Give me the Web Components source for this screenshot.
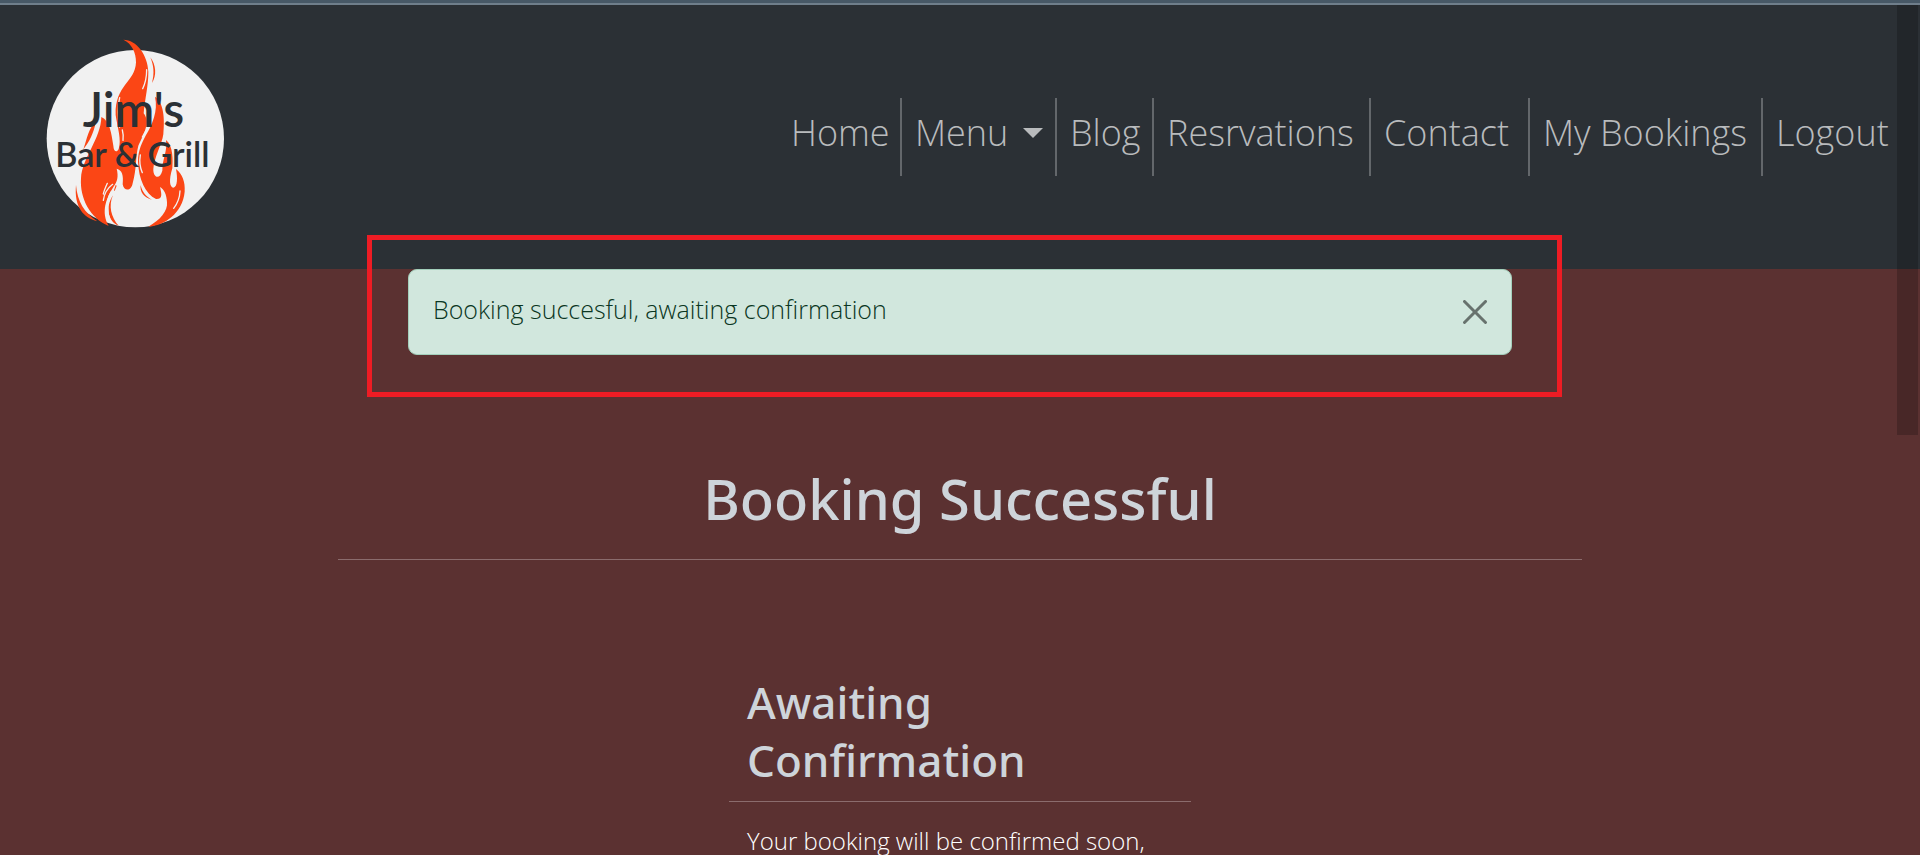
<!DOCTYPE html>
<html lang="en">
<head>
<meta charset="utf-8">
<meta name="viewport" content="width=device-width, initial-scale=1">
<title>Jim's Bar &amp; Grill</title>
<style>
html { scrollbar-width: none; background: #5b3131; }
body { margin: 0; font-family: "Open Sans", "Noto Sans", sans-serif; font-weight: 300; color: #fff; }
</style>
</head>
<body>
<site-page>
  <site-header slot="header">
    <site-logo slot="brand"></site-logo>
    <nav-item>Home</nav-item>
    <nav-item menu>Menu</nav-item>
    <nav-item>Blog</nav-item>
    <nav-item>Resrvations</nav-item>
    <nav-item>Contact</nav-item>
    <nav-item>My Bookings</nav-item>
    <nav-item last>Logout</nav-item>
  </site-header>
  <alert-message>Booking succesful, awaiting confirmation</alert-message>
  <page-title>Booking Successful</page-title>
  <booking-card>
    <span slot="title">Awaiting Confirmation</span>
    Your booking will be confirmed soon,
  </booking-card>
</site-page>

<script>
const define = (name, html, setup) => customElements.define(name, class extends HTMLElement {
  constructor() {
    super();
    const template = document.createElement('template');
    template.innerHTML = html;
    this.attachShadow({ mode: 'open' }).append(template.content.cloneNode(true));
  }
  connectedCallback() { if (setup) setup(this, this.shadowRoot); }
});

define('site-page', `
  <style>
    :host { display: block; position: relative; min-height: 100vh; background: #5b3131; }
    .strip { height: 3px; background: #475866; border-bottom: 2px solid #6f7e8b; }
    .rail { position: absolute; top: 5px; right: 2px; width: 21px; height: 430px; background: rgba(0, 0, 0, .2); }
  </style>
  <div class="strip"></div>
  <slot name="header"></slot>
  <main><slot></slot></main>
  <div class="rail"></div>`);

define('site-header', `
  <style>
    :host { display: block; background: #2b3035; }
    header { display: flex; align-items: center; justify-content: space-between; padding: 22px 18px 22px 30px; }
    nav { display: grid; grid-template-columns: 124px 155px 97px 217px 159px 233px 139px; }
  </style>
  <header><slot name="brand"></slot><nav aria-label="Main"><slot></slot></nav></header>`);

define('nav-item', `
  <style>
    :host { display: block; box-sizing: border-box; height: 78px; padding: 8px 0 16px 13px; border-right: 2px solid #63676b; }
    :host([last]) { border-right: 0; }
    a { display: flex; align-items: center; gap: 15px; color: #b9bbbd; text-decoration: none; font-size: 36px; line-height: 54px; white-space: nowrap; }
    i { display: none; border: 10px solid transparent; border-top-color: #b9bbbd; border-bottom: 0; }
    :host([menu]) i { display: block; }
  </style>
  <a href="#"><slot></slot><i></i></a>`);

define('site-logo', `
  <style>
    :host { display: block; }
    a, svg { display: block; }
    text { font-family: Lato, sans-serif; font-weight: 600; fill: #2b3035; }
  </style>
  <a href="#" aria-label="Jim's Bar and Grill">
  <svg width="220" height="220" viewBox="0 6 660 660">
    <circle cx="316" cy="341" r="266" fill="#f1f1f1"/>
    <g fill="#fb4615">
      <path d="M280 44C320 44 353 90 355 140C355 185 345 220 341 265C360 290 346 320 325 362C316 395 321 428 308 475C304 500 281 499 278 478C281 450 276 435 260 431C266 455 262 470 250 486C229 520 212 560 236 603C180 580 149 520 153 460C156 400 213 340 214 276C240 288 244 325 250 362C251 380 260 384 266 372C275 345 263 310 257 270C254 180 316 172 318 112C318 83 306 56 280 44Z"/>
      <path d="M375 215C401 232 405 280 400 328C396 358 372 398 370 432C369 458 389 466 397 437C397 400 413 380 408 345C430 363 429 406 427 430C416 465 419 487 430 488C443 487 443 457 438 432C457 447 466 470 464 500C458 565 402 602 355 605C390 586 414 558 411 532C410 508 402 493 390 486C396 510 397 523 378 522C346 506 326 462 324 410C324 374 337 352 348 330C366 300 385 258 375 215Z"/>
      <path d="M361 97C378 119 381 152 366 174C374 145 371 120 361 97Z"/>
      <path d="M138 480C142 530 163 563 202 589C160 578 132 546 138 480Z"/>
      <path d="M249 511C235 541 243 578 266 602C232 589 226 545 249 511ZM332 480C336 500 348 515 366 524C342 517 329 502 332 480ZM198 291C190 325 179 349 160 373C171 343 176 306 198 291ZM257 480L260 482L254 498L252 496Z"/>
    </g>
    <g fill="none" stroke="#f1f1f1" stroke-width="4" stroke-linecap="round">
      <path d="M350 134Q350 166 338 191M269 218Q259 258 269 306M277 315Q281 329 279 346M331 390Q326 419 337 443M347 318L337 336M248 478Q224 496 220 526M450 498Q449 527 431 550M232 475Q222 497 220 507"/>
      <path d="M244 502Q221 543 241 590" stroke-width="6"/>
    </g>
    <text x="158" y="306" font-size="144">Jim's</text>
    <text x="76" y="427" font-size="102">Bar &amp; Grill</text>
  </svg></a>`);

define('alert-message', `
  <style>
    :host { display: block; position: relative; width: 1104px; max-width: 90%; margin: 0 auto; }
    .alert { display: flex; justify-content: space-between; align-items: flex-start; padding: 19px 24px 25px; border: 1px solid #a3cfbb; border-radius: 9px; background: #d1e7dd; color: #0a3622; font-size: 25px; line-height: 40px; }
    button { display: flex; margin: 11px 0 0; padding: 0; border: 0; background: none; opacity: .5; }
    .frame { position: absolute; inset: -34px -50px -42px -41px; border: 5px solid #ee1c24; pointer-events: none; }
  </style>
  <div class="alert" role="alert"><span><slot></slot></span>
    <button type="button" aria-label="Close"><svg width="24" height="24" viewBox="0 0 16 16"><path d="M.293.293a1 1 0 0 1 1.414 0L8 6.586 14.293.293a1 1 0 1 1 1.414 1.414L9.414 8l6.293 6.293a1 1 0 0 1-1.414 1.414L8 9.414l-6.293 6.293a1 1 0 0 1-1.414-1.414L6.586 8 .293 1.707a1 1 0 0 1 0-1.414z"/></svg></button>
  </div>
  <div class="frame"></div>`, (host, root) => {
    root.querySelector('button').addEventListener('click', () => host.remove());
  });

define('page-title', `
  <style>
    :host { display: block; width: 1244px; max-width: 90%; margin: 103px auto 113px; border-bottom: 1px solid #8b6c6d; }
    h1 { margin: 0 0 21px; color: #ced4da; font-family: "Noto Sans", sans-serif; font-size: 56px; font-weight: 500; line-height: 80px; text-align: center; }
  </style>
  <h1><slot></slot></h1>`);

define('booking-card', `
  <style>
    :host { display: block; width: 462px; max-width: 90%; margin: 0 auto; }
    h2 { margin: 0; padding: 0 120px 12px 18px; border-bottom: 1px solid #8b6c6d; color: #ced4da; font-family: "Noto Sans", sans-serif; font-size: 44px; font-weight: 500; line-height: 58px; }
    p { margin: 0; padding: 21px 18px; font-size: 24px; line-height: 36px; }
  </style>
  <h2><slot name="title"></slot></h2>
  <p><slot></slot></p>`);
</script>
</body>
</html>
